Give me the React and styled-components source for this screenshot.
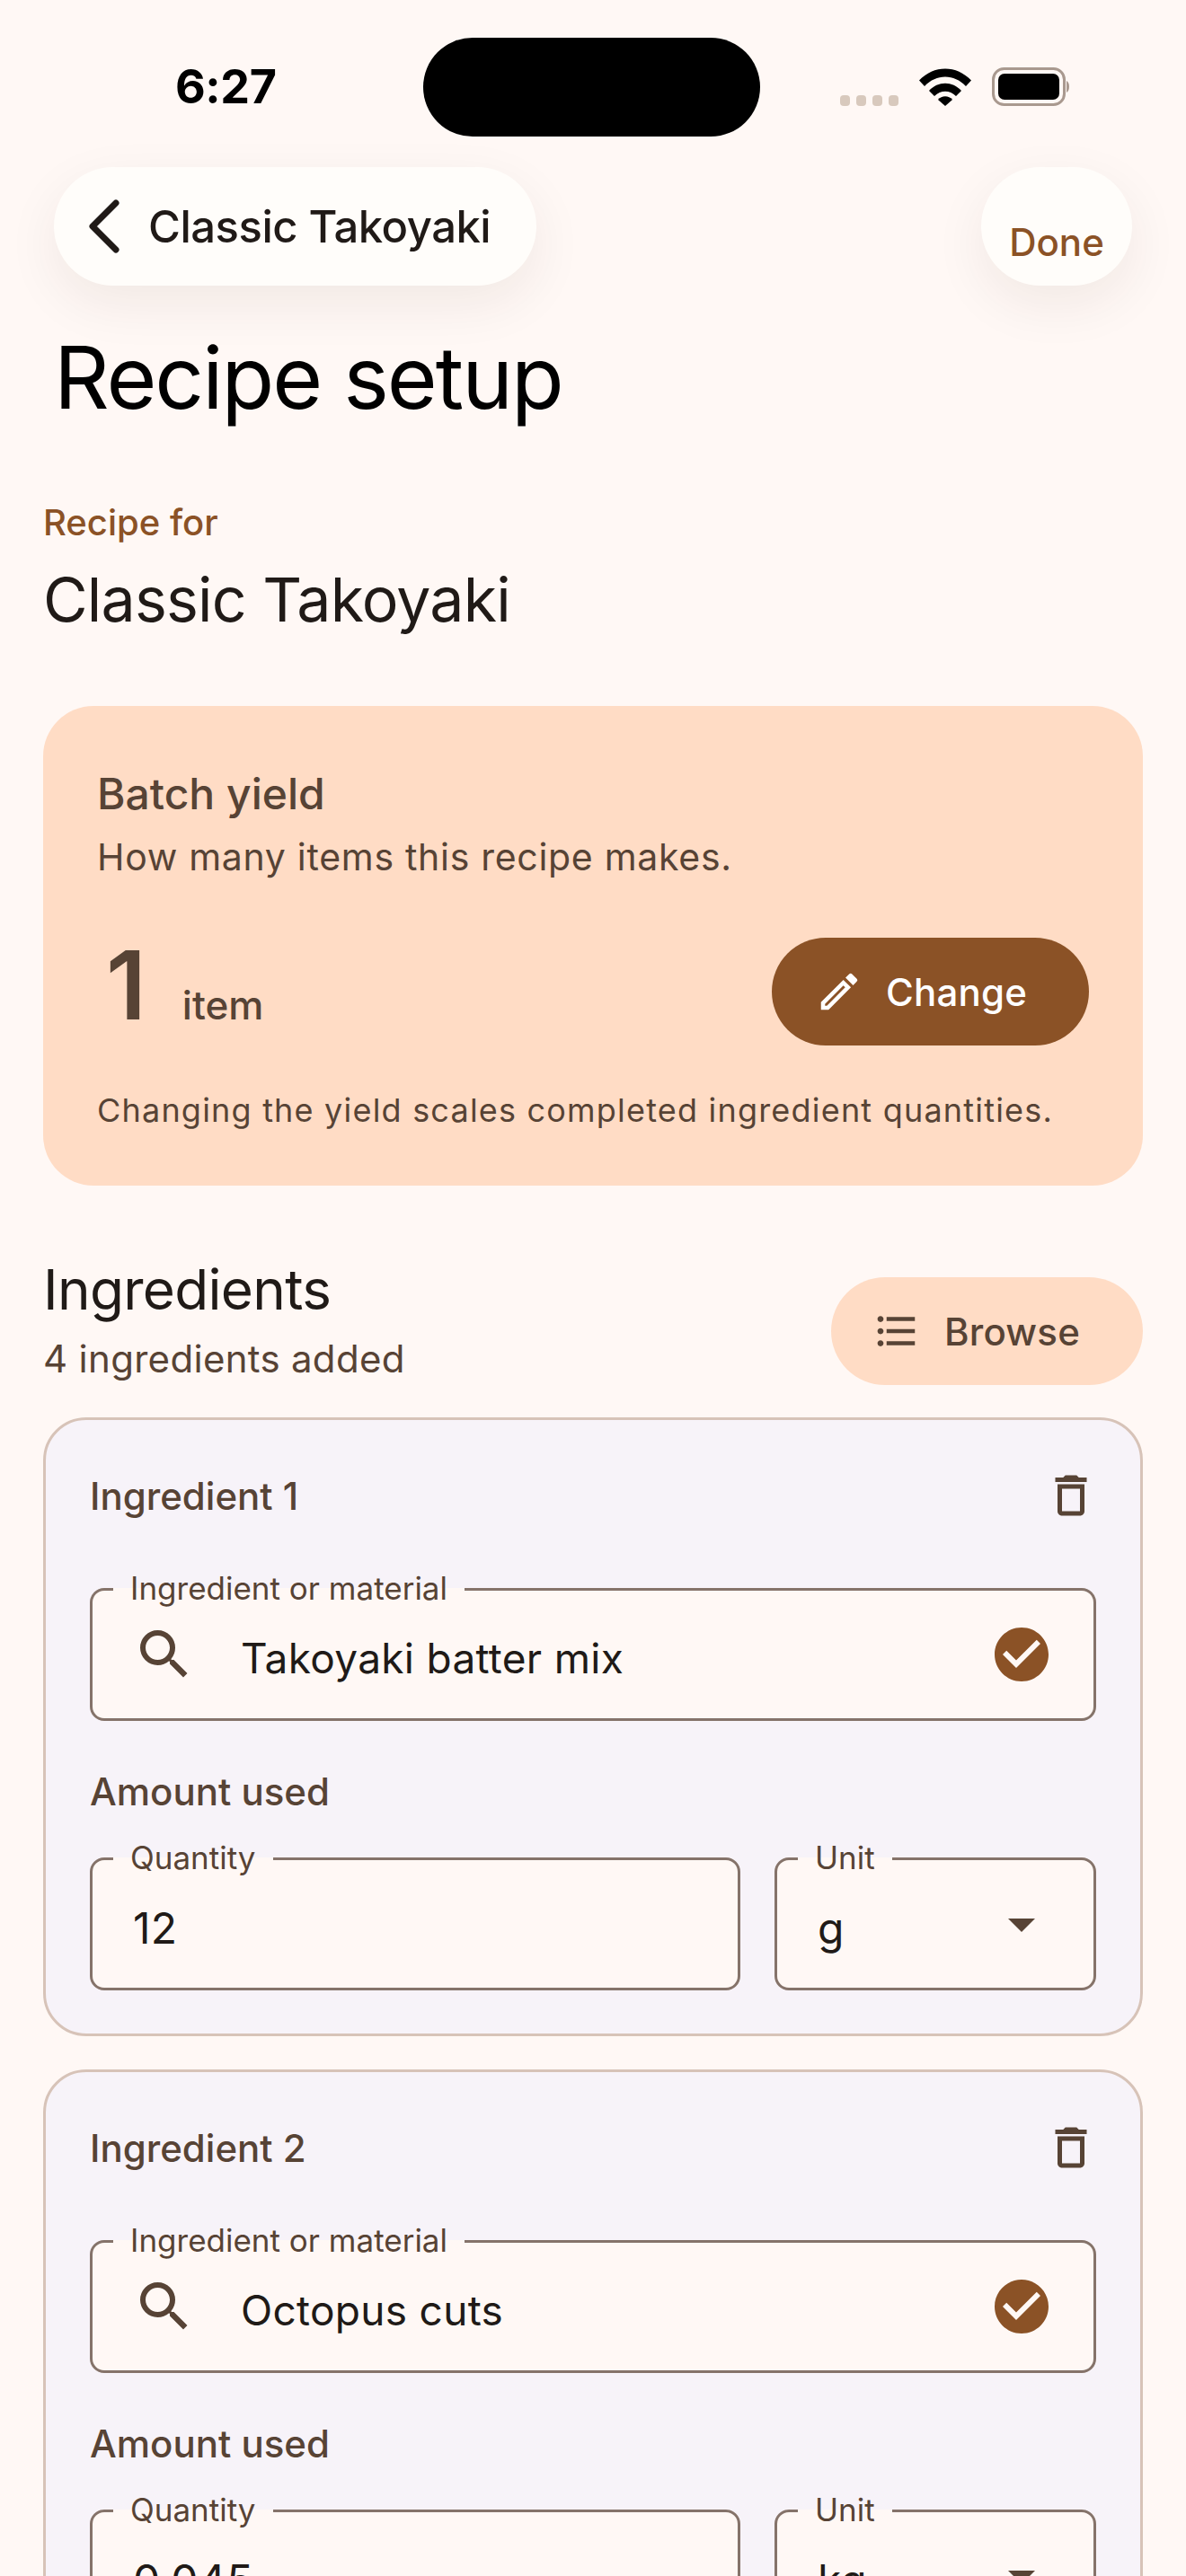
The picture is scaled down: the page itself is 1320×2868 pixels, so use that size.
// App.jsx
import React from 'react';
import styled, { createGlobalStyle } from 'styled-components';
import {
  MdArrowDropDown,
  MdCheckCircle,
  MdOutlineEdit,
  MdFormatListBulleted,
  MdOutlineDelete,
  MdSearch,
} from 'react-icons/md';

const GlobalStyle = createGlobalStyle`
  html, body {
    margin: 0;
    padding: 0;
    background: #fff8f5;
  }
  * {
    box-sizing: border-box;
  }
`;

const Page = styled.div`
  width: 1320px;
  height: 2868px;
  overflow: hidden;
  background: #fff8f5;
  font-family: Inter, 'Liberation Sans', sans-serif;
  color: #201a17;
`;

const StatusBar = styled.div`
  height: 186px;
  padding: 42px 130px 0 195px;
  display: flex;
  align-items: flex-start;
`;

const Clock = styled.div`
  width: 277px;
  margin-top: 34px;
  font-size: 52px;
  line-height: 42px;
  font-weight: 700;
  letter-spacing: -0.4px;
  color: #000;
`;

const Island = styled.div`
  width: 376px;
  height: 110px;
  border-radius: 55px;
  background: #000;
`;

const StatusIcons = styled.div`
  margin-left: 89px;
  margin-top: 33px;
  display: flex;
  align-items: flex-end;
`;

const SignalDots = styled.div`
  display: flex;
  gap: 7px;
  margin-right: 23px;
`;

const SignalDot = styled.span`
  width: 11px;
  height: 12px;
  border-radius: 4px;
  background: #d8c9bd;
`;

const NavRow = styled.div`
  padding: 0 60px;
  display: flex;
  justify-content: space-between;
`;

const NavPill = styled.div`
  height: 132px;
  border-radius: 66px;
  background: #fffdfa;
  box-shadow: 0 20px 60px rgba(60, 30, 20, 0.07);
  display: flex;
  align-items: center;
`;

const BackPill = styled(NavPill)`
  width: 537px;
  padding-left: 36px;
  gap: 29px;
`;

const BackLabel = styled.span`
  font-size: 49px;
  font-weight: 500;
  letter-spacing: -0.5px;
  color: #201a17;
`;

const DonePill = styled(NavPill)`
  width: 168px;
  justify-content: center;
  padding-top: 34px;
  font-size: 42px;
  font-weight: 500;
  color: #8b5226;
`;

const Title = styled.h1`
  margin: 52px 0 0 60px;
  font-size: 96px;
  line-height: 100px;
  font-weight: 400;
  letter-spacing: -2px;
  color: #000;
`;

const Content = styled.div`
  padding: 0 48px;
`;

const RecipeFor = styled.div`
  margin-top: 86px;
  font-size: 40px;
  line-height: 52px;
  font-weight: 500;
  color: #8b5226;
`;

const RecipeName = styled.div`
  margin-top: 18px;
  font-size: 68px;
  line-height: 82px;
  font-weight: 400;
  letter-spacing: -0.8px;
`;

const YieldCard = styled.section`
  margin-top: 78px;
  height: 534px;
  padding: 68px 60px 0;
  border-radius: 56px;
  background: #ffdcc5;
  color: #574335;
`;

const YieldTitle = styled.div`
  font-size: 48px;
  line-height: 60px;
  font-weight: 500;
`;

const YieldHint = styled.div`
  margin-top: 12px;
  font-size: 41px;
  line-height: 56px;
  letter-spacing: 0.7px;
`;

const YieldRow = styled.div`
  margin-top: 62px;
  height: 120px;
  display: flex;
  align-items: center;
  justify-content: space-between;
`;

const YieldValue = styled.div`
  margin-top: -14px;
  padding-left: 10px;
  display: flex;
  align-items: baseline;
  gap: 40px;
`;

const YieldNumber = styled.span`
  font-size: 106px;
  line-height: 120px;
  font-weight: 600;
`;

const YieldUnit = styled.span`
  font-size: 44px;
  font-weight: 500;
`;

const PillButton = styled.button`
  height: 120px;
  border: 0;
  border-radius: 60px;
  padding: 0;
  display: flex;
  align-items: center;
  font-family: inherit;
  font-size: 42px;
  font-weight: 500;
  letter-spacing: 0.2px;
  background: ${(props) => (props.$filled ? '#8b5226' : '#ffdcc5')};
  color: ${(props) => (props.$filled ? '#fff' : '#574335')};
`;

const ChangeButton = styled(PillButton)`
  width: 353px;
  padding-left: 48px;
  gap: 25px;
`;

const BrowseButton = styled(PillButton)`
  width: 347px;
  padding-left: 46px;
  gap: 26px;
`;

const YieldNote = styled.div`
  margin-top: 50px;
  font-size: 36px;
  line-height: 44px;
  letter-spacing: 1.2px;
  white-space: nowrap;
`;

const SectionRow = styled.div`
  margin-top: 77px;
  display: flex;
  justify-content: space-between;
`;

const SectionTitle = styled.h2`
  margin: 0;
  font-size: 62px;
  line-height: 78px;
  font-weight: 400;
  letter-spacing: -0.7px;
`;

const SectionCount = styled.div`
  margin-top: 12px;
  font-size: 42px;
  line-height: 52px;
  letter-spacing: 0.3px;
  color: #574335;
`;

const BrowseWrap = styled.div`
  padding-top: 25px;
`;

const IngredientList = styled.div`
  margin-top: 36px;
  display: flex;
  flex-direction: column;
  gap: 37px;
`;

const IngredientCard = styled.section`
  padding: 48px 49px 48px;
  border: 3px solid #d7c3b8;
  border-radius: 48px;
  background: #f7f3f9;
`;

const CardHeader = styled.div`
  height: 72px;
  display: flex;
  align-items: center;
  justify-content: space-between;
  color: #574335;
`;

const CardTitle = styled.div`
  font-size: 42px;
  font-weight: 500;
`;

const Field = styled.fieldset`
  margin: 0;
  min-width: 0;
  height: 148px;
  padding: 0;
  border: 3px solid #85736a;
  border-radius: 16px;
  background: #fff8f5;
  display: flex;
  align-items: center;
`;

const FieldLegend = styled.legend`
  height: 3px;
  margin-left: 23px;
  padding: 0 19px;
  font-size: 35px;
  line-height: 0;
  color: #574335;
  white-space: nowrap;
`;

const NameRow = styled.div`
  margin-top: 67px;
`;

const NameInner = styled.div`
  width: 100%;
  display: flex;
  align-items: center;
  padding: 0 44px;
  color: #574335;
`;

const NameValue = styled.span`
  flex: 1;
  margin-left: 49px;
  padding-top: 8px;
  font-size: 46px;
  letter-spacing: 0.3px;
  color: #201a17;
`;

const CheckMark = styled.span`
  display: flex;
  color: #8b5226;
`;

const AmountLabel = styled.div`
  margin-top: 57px;
  font-size: 42px;
  line-height: 44px;
  font-weight: 500;
  color: #574335;
`;

const AmountRow = styled.div`
  margin-top: 51px;
  display: grid;
  grid-template-columns: 724px 358px;
  gap: 38px;
`;

const PlainValue = styled.div`
  width: 100%;
  padding: 8px 0 0 45px;
  font-size: 48px;
  letter-spacing: 0.3px;
  color: #201a17;
`;

const UnitInner = styled.div`
  width: 100%;
  display: flex;
  align-items: center;
  justify-content: space-between;
  padding: 0 44px 0 45px;
  color: #574335;
`;

const UnitValue = styled.span`
  padding-top: 8px;
  font-size: 48px;
  color: #201a17;
`;

const ingredients = [
  { name: 'Takoyaki batter mix', quantity: '12', unit: 'g' },
  { name: 'Octopus cuts', quantity: '0.045', unit: 'kg' },
];

const BackChevron = () => (
  <svg width="40" height="60" viewBox="0 0 40 60" fill="none">
    <polyline
      points="33,4 7,30 33,56"
      stroke="#201a17"
      strokeWidth="7"
      strokeLinecap="round"
      strokeLinejoin="round"
    />
  </svg>
);

const WifiIcon = () => (
  <svg width="58" height="42" viewBox="0 0 58 42" style={{ marginRight: 23 }}>
    <path d="M0 13.5C16-4 42-4 58 13.5L52 20C39 6 19 6 6 20Z" fill="#000" />
    <path d="M11 25C21 14 37 14 47 25L41 31C34 24 24 24 17 31Z" fill="#000" />
    <path d="M21 35C25 30 33 30 37 35L29 42Z" fill="#000" />
  </svg>
);

const BatteryIcon = () => (
  <svg width="86" height="43" viewBox="0 0 86 43">
    <rect x="1.5" y="1.5" width="79" height="40" rx="12" fill="none" stroke="#a9998f" strokeWidth="3" />
    <rect x="7" y="7" width="68" height="29" rx="7" fill="#000" />
    <path d="M83 15c2 1 3 3.500 3 6.500s-1 5.500-3 6.500Z" fill="#a9998f" />
  </svg>
);

const IngredientItem = ({ index, item }) => (
  <IngredientCard>
    <CardHeader>
      <CardTitle>Ingredient {index + 1}</CardTitle>
      <MdOutlineDelete size={60} style={{ marginRight: -2 }} />
    </CardHeader>
    <NameRow>
      <Field>
        <FieldLegend>Ingredient or material</FieldLegend>
        <NameInner>
          <MdSearch size={72} />
          <NameValue>{item.name}</NameValue>
          <CheckMark>
            <MdCheckCircle size={72} />
          </CheckMark>
        </NameInner>
      </Field>
    </NameRow>
    <AmountLabel>Amount used</AmountLabel>
    <AmountRow>
      <Field>
        <FieldLegend>Quantity</FieldLegend>
        <PlainValue>{item.quantity}</PlainValue>
      </Field>
      <Field>
        <FieldLegend>Unit</FieldLegend>
        <UnitInner>
          <UnitValue>{item.unit}</UnitValue>
          <MdArrowDropDown size={72} />
        </UnitInner>
      </Field>
    </AmountRow>
  </IngredientCard>
);

const App = () => (
  <Page>
    <GlobalStyle />
    <StatusBar>
      <Clock>6:27</Clock>
      <Island />
      <StatusIcons>
        <SignalDots>
          <SignalDot />
          <SignalDot />
          <SignalDot />
          <SignalDot />
        </SignalDots>
        <WifiIcon />
        <BatteryIcon />
      </StatusIcons>
    </StatusBar>
    <NavRow>
      <BackPill>
        <BackChevron />
        <BackLabel>Classic Takoyaki</BackLabel>
      </BackPill>
      <DonePill>Done</DonePill>
    </NavRow>
    <Title>Recipe setup</Title>
    <Content>
      <RecipeFor>Recipe for</RecipeFor>
      <RecipeName>Classic Takoyaki</RecipeName>
      <YieldCard>
        <YieldTitle>Batch yield</YieldTitle>
        <YieldHint>How many items this recipe makes.</YieldHint>
        <YieldRow>
          <YieldValue>
            <YieldNumber>1</YieldNumber>
            <YieldUnit>item</YieldUnit>
          </YieldValue>
          <ChangeButton $filled>
            <MdOutlineEdit size={54} />
            Change
          </ChangeButton>
        </YieldRow>
        <YieldNote>Changing the yield scales completed ingredient quantities.</YieldNote>
      </YieldCard>
      <SectionRow>
        <div>
          <SectionTitle>Ingredients</SectionTitle>
          <SectionCount>4 ingredients added</SectionCount>
        </div>
        <BrowseWrap>
          <BrowseButton>
            <MdFormatListBulleted size={54} />
            Browse
          </BrowseButton>
        </BrowseWrap>
      </SectionRow>
      <IngredientList>
        {ingredients.map((item, index) => (
          <IngredientItem key={item.name} index={index} item={item} />
        ))}
      </IngredientList>
    </Content>
  </Page>
);

export default App;
